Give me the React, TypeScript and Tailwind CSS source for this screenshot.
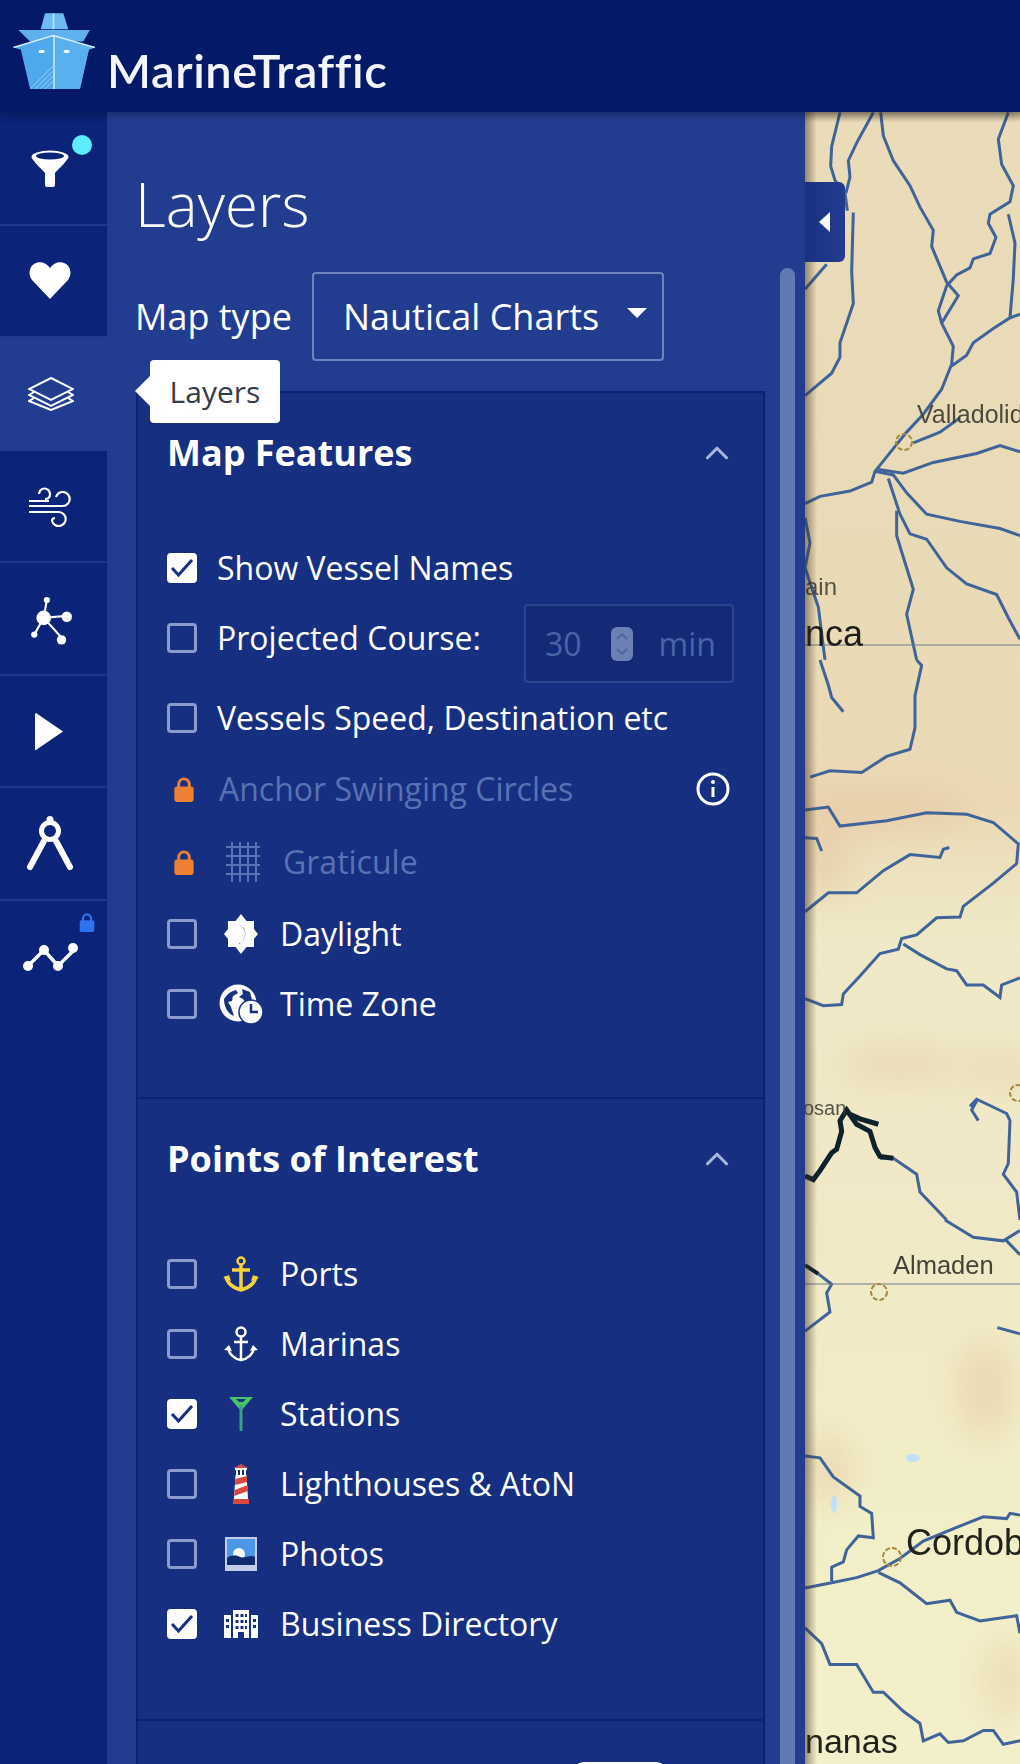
import React from 'react';
import { ChevronUp } from 'lucide-react';

const Lock = ({ className }: { className?: string }) => (
  <svg viewBox="0 0 20 26" className={className}>
    <path d="M4.500 11V7.500a5.500 5.500 0 0 1 11 0V11" fill="none" stroke="currentColor" strokeWidth="3" />
    <rect x="0" y="10" width="20" height="16" rx="2.500" fill="currentColor" />
  </svg>
);

const Check = ({ on }: { on?: boolean }) =>
  on ? (
    <span className="flex h-[30px] w-[30px] shrink-0 items-center justify-center rounded-[4px] bg-white">
      <svg viewBox="0 0 30 30" className="h-[30px] w-[30px]">
        <path d="M5 15l6.500 7L25 7" fill="none" stroke="#172f80" strokeWidth="3" />
      </svg>
    </span>
  ) : (
    <span className="h-[30px] w-[30px] shrink-0 rounded-[4px] border-[3px] border-[#8b9bcc]" />
  );

const Row = ({ on, icon, children, className }: { on?: boolean; icon?: React.ReactNode; children: React.ReactNode; className?: string }) => (
  <div className={`flex h-[70px] items-center pl-[29px] ${className ?? ''}`}>
    <Check on={on} />
    {icon ? (
      <>
        <span className="ml-[20px] flex w-[48px] shrink-0 justify-center">{icon}</span>
        <span className="ml-[15px] text-[32px] text-white">{children}</span>
      </>
    ) : (
      <span className="ml-[20px] text-[32px] text-white">{children}</span>
    )}
  </div>
);

const SectionHead = ({ title }: { title: string }) => (
  <div className="flex h-[120px] items-center justify-between pl-[29px] pr-[27px]">
    <h3 className="text-[36px] font-bold text-white">{title}</h3>
    <ChevronUp className="h-[38px] w-[38px] text-[#a9b6dc]" strokeWidth={2} />
  </div>
);

const Daylight = () => (
  <svg viewBox="0 0 34 40" className="h-[40px] w-[34px]">
    <path d="M17 0l5.500 7H30v8l4 5-4 5v8h-7.500L17 40l-5.500-7H4v-8l-4-5 4-5V7h7.500z" fill="#fff" />
    <path d="M14 10a10.500 10.500 0 0 1 0 20 10 10 0 0 0 7-10 10 10 0 0 0-7-10z" fill="#172f80" />
  </svg>
);

const TimeZone = () => (
  <svg viewBox="0 0 46 42" className="h-[42px] w-[46px]">
    <circle cx="20" cy="20" r="18.500" fill="#fff" />
    <path d="M6 16c3-5 7-8 12-9l2 3-5 3-1 5-4 1 3 5 3 9c-6-2-10-9-10-17zM24 6l8 3 2 8-6 3-3-4-4-2 4-3z" fill="#172f80" />
    <circle cx="33" cy="29" r="12" fill="#fff" stroke="#172f80" strokeWidth="1.500" />
    <path d="M33 21v8h7" fill="none" stroke="#172f80" strokeWidth="2.500" />
  </svg>
);

const Grid = () => (
  <svg viewBox="0 0 34 40" className="h-[40px] w-[34px]" stroke="#5872b4" strokeWidth="2">
    <path d="M6 0v40M14 0v40M22 0v40M30 0v40M0 5h34M0 14h34M0 23h34M0 32h34" />
  </svg>
);

const Ports = () => (
  <svg viewBox="0 0 36 38" className="h-[38px] w-[36px]" fill="none" stroke="#f6d23c" strokeWidth="3.500">
    <circle cx="18" cy="6" r="3.500" strokeWidth="2.500" />
    <path d="M18 10v25M9 15h18M3 21c1 8 8 12 15 14 7-2 14-6 15-14" />
    <path d="M0 23l6-3 2 6zM36 23l-6-3-2 6z" fill="#f6d23c" stroke="none" />
  </svg>
);

const Marinas = () => (
  <svg viewBox="0 0 34 36" className="h-[36px] w-[34px]" fill="none" stroke="#fff" strokeWidth="2.500">
    <circle cx="17" cy="6" r="4.500" />
    <path d="M17 11v23M10 16h14M4 22c1 6 6 11 13 12 7-1 12-6 13-12" />
    <path d="M0 24l5-5 3 6zM34 24l-5-5-3 6z" fill="#fff" stroke="none" />
  </svg>
);

const Stations = () => (
  <svg viewBox="0 0 24 34" className="h-[34px] w-[24px]">
    <path d="M0 0h24L12 14z" fill="#45c46a" />
    <path d="M7 2l3 3h4l3-3z" fill="#172f80" />
    <rect x="10.500" y="8" width="3" height="26" fill="#3f9e88" />
  </svg>
);

const Lighthouse = () => (
  <svg viewBox="0 0 16 40" className="h-[40px] w-[16px]">
    <path d="M8 0l7 4H1z" fill="#d9483f" />
    <rect x="2" y="4" width="12" height="2" fill="#fff" />
    <path d="M3 6h2v5H3zM7 6h2v5H7zM11 6h2v5h-2z" fill="#fff" />
    <path d="M2.500 11h11l1.500 24H1z" fill="#fff" />
    <path d="M2.300 15l11.500-3 .3 6L2 21zM1.700 26l12.900-5 .3 6L1.300 32z" fill="#d9483f" />
    <rect x="0" y="35" width="16" height="5" fill="#d9483f" />
  </svg>
);

const Photo = () => (
  <svg viewBox="0 0 32 34" className="h-[34px] w-[32px]">
    <rect width="32" height="34" fill="#c3cdea" />
    <rect x="2" y="2" width="28" height="26" fill="#4c97e8" />
    <circle cx="14" cy="17" r="6" fill="#fff" />
    <path d="M2 21c4-3 9-3 13-1 5 2 10-3 15 0v8H2z" fill="#0f2a6e" />
  </svg>
);

const Building = () => (
  <svg viewBox="0 0 34 28" className="h-[28px] w-[34px]">
    <path fillRule="evenodd" fill="#fff" d="M0 5h7v23H0zM9 0h16v28h-5v-6h-6v6H9zM27 5h7v23h-7zM2 9v3h3V9zM2 15v3h3v-3zM29 9v3h3V9zM29 15v3h3v-3zM11.500 4v3h3V4zM16.500 4v3h3V4zM21 4v3h2V4zM11.500 10v3h3v-3zM16.500 10v3h3v-3zM21 10v3h2v-3zM11.500 16v3h3v-3zM16.500 16v3h3v-3zM21 16v3h2v-3z" />
  </svg>
);

const navIcons: React.ReactNode[] = [
  <svg viewBox="0 0 40 38" className="h-[38px] w-[40px]">
    <ellipse cx="20" cy="8" rx="18.500" ry="6.500" fill="#fff" />
    <ellipse cx="20" cy="7" rx="14" ry="3.500" fill="#0c2478" />
    <path d="M2 9c4 7 10 11 13 15v12a2 2 0 0 0 2 2h6a2 2 0 0 0 2-2V24c3-4 9-8 13-15-8 5-28 5-36 0z" fill="#fff" />
  </svg>,
  <svg viewBox="0 0 42 37" className="h-[37px] w-[42px]">
    <path d="M21 37L3 18C-1 13 0 5 5 2c5-3 12-2 16 4 4-6 11-7 16-4 5 3 6 11 2 16z" fill="#fff" />
  </svg>,
  <svg viewBox="0 0 46 34" className="h-[34px] w-[46px]" fill="none" stroke="#fff" strokeWidth="2">
    <path d="M23 1l22 11-22 11L1 12z" />
    <path d="M6 15l-5 3 22 11 22-11-5-3" />
    <path d="M6 21l-5 3 22 9 22-9-5-3" />
  </svg>,
  <svg viewBox="0 0 44 46" className="h-[46px] w-[44px]" fill="none" stroke="#fff" strokeWidth="2.200">
    <path d="M11 11a5.500 5.500 0 0 1 11 0c0 3-2 5-5 5" />
    <path d="M1 18h20M1 23h34a7 7 0 1 0-7-9" />
    <path d="M1 29h30a7 7 0 1 1-7 9c0-2 1-3 3-3" />
  </svg>,
  <svg viewBox="0 0 42 48" className="mt-[6px] h-[52px] w-[44px]" fill="#fff" stroke="#fff" strokeWidth="2">
    <path d="M15 21L18 4M15 21l23-2M15 21L6 37M15 21l18 20" fill="none" />
    <circle cx="15" cy="21" r="7" stroke="none" />
    <circle cx="18" cy="4" r="3" stroke="none" />
    <circle cx="37" cy="20" r="5" stroke="none" />
    <circle cx="6" cy="37" r="3" stroke="none" />
    <circle cx="32" cy="42" r="4.500" stroke="none" />
  </svg>,
  <svg viewBox="0 0 28 37" className="mr-[2px] mt-[2px] h-[37px] w-[28px]">
    <path d="M0 1l1-1 27 18.500L1 37H0z" fill="#fff" />
  </svg>,
  <svg viewBox="0 0 46 54" className="h-[56px] w-[46px]" fill="none" stroke="#fff">
    <circle cx="23" cy="15" r="8.500" strokeWidth="5" />
    <circle cx="23" cy="3.500" r="3.500" fill="#fff" stroke="none" />
    <path d="M17 25L3 51M29 25l14 26" strokeWidth="6" strokeLinecap="round" />
  </svg>,
  <svg viewBox="0 0 56 30" className="h-[30px] w-[56px]" stroke="#fff" strokeWidth="3.500" fill="#fff">
    <path d="M6 24l16-16 14 16 16-16" fill="none" />
    <circle cx="6" cy="24" r="5" stroke="none" />
    <circle cx="22" cy="8" r="5" stroke="none" />
    <circle cx="36" cy="24" r="5" stroke="none" />
    <circle cx="51" cy="6" r="5" stroke="none" />
  </svg>,
];

const Sidebar = () => (
  <nav className="relative z-10 flex w-[107px] shrink-0 flex-col bg-[#0b2378] pt-px">
    {navIcons.map((icon, i) => (
      <div
        key={i}
        className={`relative flex h-[112.5px] items-center justify-center ${i === 2 ? 'w-[116px] bg-[#223c90]' : i === 7 ? '' : 'border-b-2 border-[#21398a]'}`}
      >
        <span className={i === 2 ? 'mr-[15px] flex' : 'mr-[8px] flex'}>{icon}</span>
        {i === 0 && <span className="absolute left-[72px] top-[22px] h-5 w-5 rounded-full bg-[#5cecff]" />}
        {i === 7 && <Lock className="absolute left-[79px] top-[12px] h-[19px] w-[16px] text-[#2f72f0]" />}
      </div>
    ))}
  </nav>
);

const MapFeatures = () => (
  <section className="border-b-2 border-[#0b2174] pb-[58px]">
    <SectionHead title="Map Features" />
    <div className="pt-[20px]">
      <Row on>Show Vessel Names</Row>
      <div className="flex h-[80px] items-start justify-between pr-[29px]">
        <Row>Projected Course:</Row>
        <div className="mt-px flex h-[79px] w-[210px] items-center rounded-[4px] border-2 border-[#2b4590] bg-[#142a76] pl-[19px] text-[32px] text-[#4a64a8]">
          <span>30</span>
          <span className="ml-[29px] flex h-[34px] w-[22px] flex-col items-center justify-center rounded-[6px] bg-[#6c80b6] text-[#4a64a8]">
            <svg viewBox="0 0 22 34" className="h-[34px] w-[22px]" fill="none" stroke="#4f669f" strokeWidth="2">
              <path d="M6 12l5-5 5 5M6 22l5 5 5-5" />
            </svg>
          </span>
          <span className="ml-[26px]">min</span>
        </div>
      </div>
      <Row>Vessels Speed, Destination etc</Row>
      <div className="mt-px flex h-[70px] items-center justify-between pl-[36px] pr-[33px]">
        <div className="flex items-center">
          <Lock className="h-[25px] w-[20px] text-[#ee8033]" />
          <span className="ml-[25px] text-[32px] text-[#5872b4]">Anchor Swinging Circles</span>
        </div>
        <svg viewBox="0 0 34 34" className="h-[34px] w-[34px]" fill="none" stroke="#fff" strokeWidth="3">
          <circle cx="17" cy="17" r="15" />
          <path d="M17 15v10" />
          <circle cx="17" cy="10" r="2" fill="#fff" stroke="none" />
        </svg>
      </div>
      <div className="mt-[3px] flex h-[70px] items-center pl-[36px]">
        <Lock className="h-[25px] w-[20px] text-[#ee8033]" />
        <span className="ml-[32px] flex"><Grid /></span>
        <span className="ml-[23px] text-[32px] text-[#5872b4]">Graticule</span>
      </div>
      <Row icon={<Daylight />} className="mt-[2px]">Daylight</Row>
      <Row icon={<TimeZone />}>Time Zone</Row>
    </div>
  </section>
);

const PointsOfInterest = () => (
  <section className="border-b-2 border-[#0b2174] pb-[60px]">
    <SectionHead title="Points of Interest" />
    <div className="pt-[20px]">
      <Row icon={<Ports />}>Ports</Row>
      <Row icon={<Marinas />}>Marinas</Row>
      <Row on icon={<Stations />}>Stations</Row>
      <Row icon={<Lighthouse />}>Lighthouses &amp; AtoN</Row>
      <Row icon={<Photo />}>Photos</Row>
      <Row on icon={<Building />}>Business Directory</Row>
    </div>
  </section>
);

const MapCanvas = () => (
  <svg viewBox="805 112 215 1652" preserveAspectRatio="none" className="block h-full w-full">
    <defs>
      <linearGradient id="land" x1="0" y1="0" x2="0" y2="1">
        <stop offset="0" stopColor="#ebdcb9" />
        <stop offset="0.25" stopColor="#e9dbb7" />
        <stop offset="0.42" stopColor="#ebd9b5" />
        <stop offset="0.5" stopColor="#efe9c7" />
        <stop offset="0.65" stopColor="#f0e8c6" />
        <stop offset="0.85" stopColor="#f2efc8" />
        <stop offset="1" stopColor="#f3efca" />
      </linearGradient>
      <filter id="soft"><feGaussianBlur stdDeviation="16" /></filter>
      <filter id="edge"><feGaussianBlur stdDeviation="0.6" /></filter>
    </defs>
    <rect x="805" y="112" width="215" height="1652" fill="url(#land)" />
    <g filter="url(#soft)" fill="#e2bf98" opacity="0.4">
      <ellipse cx="880" cy="810" rx="90" ry="22" />
      <ellipse cx="820" cy="860" rx="30" ry="40" />
      <ellipse cx="900" cy="1065" rx="60" ry="16" />
      <ellipse cx="1000" cy="1070" rx="40" ry="14" />
      <ellipse cx="985" cy="1390" rx="30" ry="50" />
      <ellipse cx="1005" cy="1680" rx="20" ry="40" />
      <ellipse cx="830" cy="1470" rx="24" ry="36" />
    </g>
    <g filter="url(#edge)">
      <g transform="translate(760 100) scale(0.3333 0.3571)" fill="none" stroke="#3f6499" strokeWidth="3">
        <path vectorEffect="non-scaling-stroke" d="M240 35L215 130L212 185L225 225L255 260L262 310" />
        <path vectorEffect="non-scaling-stroke" d="M280 315L275 480L280 570L240 680L240 720L215 765L135 828" />
        <path vectorEffect="non-scaling-stroke" d="M340 35L290 120L265 170L270 215L258 260" />
        <path vectorEffect="non-scaling-stroke" d="M362 35L370 100L400 170L450 240L480 300L520 365L515 410L560 510L595 548L545 625L580 690L575 740L545 810L490 880L440 930L345 1040L335 1070L270 1095L180 1110L135 1130" />
        <path vectorEffect="non-scaling-stroke" d="M745 35L715 110L725 180L760 240L750 285L690 320L685 345L708 385L690 430L640 445L630 470L590 490L560 520L535 590L545 625" />
        <path vectorEffect="non-scaling-stroke" d="M745 320L765 400L760 500L750 610L700 640L640 680L620 715L575 745" />
        <path vectorEffect="non-scaling-stroke" d="M750 610L780 600M135 530L200 460" />
        <path vectorEffect="non-scaling-stroke" d="M460 960L540 930L600 890" />
        <path vectorEffect="non-scaling-stroke" d="M355 1035L430 1045L520 1015L650 990L720 968L780 985" />
        <path vectorEffect="non-scaling-stroke" d="M345 1040L400 1050L440 1100L500 1160L600 1180L720 1200L780 1220" />
        <path vectorEffect="non-scaling-stroke" d="M385 1060L420 1160L450 1215L500 1230L560 1310L620 1355L710 1385L745 1450L780 1510" />
        <path vectorEffect="non-scaling-stroke" d="M410 1150L410 1220L460 1370L440 1440L470 1568" />
        <path vectorEffect="non-scaling-stroke" d="M135 1170L150 1240L135 1310L175 1420L195 1568" />
      </g>
      <g transform="translate(760 660) scale(0.3333 0.3571)" fill="none" stroke="#3f6499" strokeWidth="3">
        <path vectorEffect="non-scaling-stroke" d="M180 0L205 70L215 105L250 145" />
        <path vectorEffect="non-scaling-stroke" d="M470 0L485 15L465 100L465 190L450 250L380 270L305 315L210 310L150 328" />
        <path vectorEffect="non-scaling-stroke" d="M135 420L205 412L240 465L380 450L500 428L620 432L700 455L775 515L770 570L700 625L610 690L600 720L530 722L470 770L425 780L415 810L360 822L300 885L250 935L245 965L190 968L135 948" />
        <path vectorEffect="non-scaling-stroke" d="M135 498L170 500L185 535" />
        <path vectorEffect="non-scaling-stroke" d="M135 705L205 652L290 652L370 590L450 545L540 553L550 530L568 525" />
        <path vectorEffect="non-scaling-stroke" d="M430 795L480 825L560 865L590 870L620 910L670 910L720 945L725 910L780 890" />
        <path vectorEffect="non-scaling-stroke" d="M630 1250L650 1230L740 1270L750 1290L745 1410L730 1440L770 1490L780 1568M650 1235L635 1260L655 1290" />
        <path vectorEffect="non-scaling-stroke" d="M360 1395L400 1395L470 1440L480 1490L560 1568" />
        <path vectorEffect="non-scaling-stroke" stroke="#10202c" strokeWidth="5" d="M135 1445L160 1455L180 1430L215 1380L230 1370L245 1320L240 1290L260 1260L290 1300L330 1320L345 1365L360 1390L400 1395M265 1270L300 1285L355 1300" />
      </g>
      <g transform="translate(760 1220) scale(0.3333 0.3472)" fill="none" stroke="#3f6499" strokeWidth="3">
        <path vectorEffect="non-scaling-stroke" d="M555 0L640 50L730 60L780 30M735 55L780 100" />
        <path vectorEffect="non-scaling-stroke" stroke="#10202c" strokeWidth="4" d="M135 130L175 155" />
        <path vectorEffect="non-scaling-stroke" d="M175 155L215 185L200 210L210 265L135 320" />
        <path vectorEffect="non-scaling-stroke" d="M712 310L780 328" />
        <path vectorEffect="non-scaling-stroke" d="M135 680L180 685L220 740L300 795L300 825L335 845L340 915L295 910L260 950L250 985L215 1000L215 1040" />
        <path vectorEffect="non-scaling-stroke" d="M135 1060L215 1045L290 1030L355 1010L420 975L490 925L590 885L670 855L740 860L750 845L780 850" />
        <path vectorEffect="non-scaling-stroke" d="M355 1015L420 1045L460 1075L500 1105L570 1095L590 1130L660 1155L770 1140L780 1190" />
        <path vectorEffect="non-scaling-stroke" d="M135 1175L185 1220L210 1280L290 1280L340 1360L370 1360L430 1415L480 1450L490 1500L540 1480L565 1505L610 1500L670 1470L700 1470L730 1510L780 1500" />
      </g>
    </g>
    <path d="M805 645H1020M805 1284H1020" stroke="#6d7c8c" strokeWidth="1" />
    <g fill="none" stroke="#a5893f" strokeWidth="2" strokeDasharray="5 2">
      <circle cx="904" cy="442" r="8" />
      <circle cx="879" cy="1292" r="8" />
      <circle cx="892" cy="1557" r="9" />
      <circle cx="1018" cy="1093" r="8" />
    </g>
    <g fill="#bfe0f5">
      <ellipse cx="913" cy="1458" rx="7" ry="4" />
      <ellipse cx="834" cy="1504" rx="3" ry="9" />
    </g>
    <g fontFamily="'Liberation Sans', sans-serif" fill="#3b3a32" filter="url(#edge)">
      <text x="917" y="423" fontSize="25" opacity="0.9">Valladolid</text>
      <text x="805" y="595" fontSize="24" opacity="0.85">ain</text>
      <text x="805" y="646" fontSize="36" fill="#1e1e1a">nca</text>
      <text x="803" y="1115" fontSize="20" opacity="0.85">osan</text>
      <text x="893" y="1274" fontSize="25.500" opacity="0.95">Almaden</text>
      <text x="906" y="1555" fontSize="36" fill="#22221d">Cordoba</text>
      <text x="805" y="1753" fontSize="34" fill="#22221d">nanas</text>
    </g>
  </svg>
);

export default function App() {
  return (
    <div className="flex h-[1764px] w-[1020px] flex-col overflow-hidden font-['Open_Sans',sans-serif]">
      <header className="relative z-20 flex h-[112px] shrink-0 items-start bg-[#041a68] shadow-[0_3px_8px_rgba(0,0,0,0.3)]">
        <svg viewBox="0 0 300 280" className="h-[93px] w-[100px]">
          <path d="M135 40h55l15 48h-83z" fill="#6cbcf2" />
          <path d="M158 40h5v48h-5z" fill="#bfe0f8" />
          <path d="M55 90h215l-20 35H90z" fill="#5fb2ee" />
          <path d="M40 143L160 107l125 36-18 6-27 119H90L62 149z" fill="#4ea8ec" />
          <path d="M162 107l123 36-18 6-27 119h-78z" fill="#5ab0ef" />
          <path d="M40 143L160 107l125 36" fill="none" stroke="#d4ecfc" strokeWidth="4" />
          <path d="M162 107v161" stroke="#e2f2fd" strokeWidth="4" />
          <path d="M105 268l55-55M120 268l40-40M135 268l25-25M90 268l70-70" stroke="#b9ddf7" strokeWidth="2" />
          <ellipse cx="125" cy="155" rx="9" ry="5" fill="#fff" />
          <ellipse cx="200" cy="155" rx="9" ry="5" fill="#fff" />
        </svg>
        <span className="ml-[7px] mt-[42px] font-['Lato',sans-serif] text-[47px] font-semibold leading-[56px] tracking-[0.6px] text-[#f3f5fb] [font-variant-ligatures:none]">MarineTraffic</span>
      </header>
      <main className="flex min-h-0 flex-1">
        <Sidebar />
        <aside className="relative z-10 flex w-[698px] shrink-0 flex-col bg-[#223c90] pl-[28px] pr-[40px]">
          <h1 className="mt-[60px] text-[60px] font-light leading-[64px] text-white">Layers</h1>
          <div className="mt-[36px] flex items-center">
            <span className="text-[36px] text-white">Map type</span>
            <div className="ml-[20px] flex h-[89px] w-[352px] items-center rounded-[4px] border-2 border-[#6f83bf] pl-[29px] text-[36px] text-white">
              Nautical Charts
              <span className="mb-[8px] ml-[28px] h-0 w-0 border-x-[10px] border-t-[10px] border-x-transparent border-t-white" />
            </div>
          </div>
          <div className="ml-px mt-[30px] flex-1 border-x-2 border-t-2 border-[#0b2174] bg-[#172f80]">
            <MapFeatures />
            <PointsOfInterest />
            <div className="flex justify-end pr-[93px] pt-[41px]">
              <span className="h-[30px] w-[100px] rounded-[15px] bg-white" />
            </div>
          </div>
          <div className="absolute bottom-0 right-[10px] top-[156px] w-[15px] rounded-t-[8px] bg-[#627ab4]" />
          <div className="absolute left-[698px] top-[70px] flex h-[80px] w-[40px] items-center justify-center rounded-r-[6px] bg-gradient-to-r from-[#1a3180] to-[#223c90]">
            <span className="mr-[2px] h-0 w-0 border-y-[10px] border-r-[11px] border-y-transparent border-r-white" />
          </div>
          <div className="absolute left-[43px] top-[248px] z-30 flex h-[63px] w-[130px] items-center justify-center rounded-[4px] bg-white text-[30px] text-[#343b4a]">
            Layers
            <span className="absolute left-[-15px] top-[16px] h-0 w-0 border-y-[15px] border-r-[15px] border-y-transparent border-r-white" />
          </div>
        </aside>
        <div className="relative min-w-0 flex-1">
          <MapCanvas />
          <div className="absolute inset-y-0 left-0 w-[12px] bg-gradient-to-r from-[#3c321e]/50 to-transparent" />
          <div className="absolute inset-x-0 top-0 h-[10px] bg-gradient-to-b from-[#3c321e]/40 to-transparent" />
        </div>
      </main>
    </div>
  );
}
